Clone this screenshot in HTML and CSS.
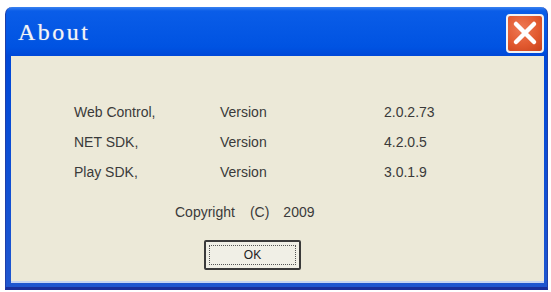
FILE: index.html
```html
<!DOCTYPE html>
<html>
<head>
<meta charset="utf-8">
<link rel="stylesheet" href="styles.css">
</head>
<body>
<div class="window">
  <div class="titlebar">
    <span class="title">About</span>
    <div class="close">
      <svg width="26" height="26" viewBox="0 0 26 26"><path d="M4 4 L22 22 M22 4 L4 22" stroke="#fff" stroke-width="4.5" stroke-linecap="round"/></svg>
    </div>
  </div>
  <div class="client">
    <div class="info">
      <span>Web Control,</span><span>Version</span><span>2.0.2.73</span>
      <span>NET SDK,</span><span>Version</span><span>4.2.0.5</span>
      <span>Play SDK,</span><span>Version</span><span>3.0.1.9</span>
    </div>
    <div class="copy"><span class="c1">Copyright</span><span class="c2">(C)</span><span class="c3">2009</span></div>
    <div class="btn"><div class="focus">OK</div></div>
  </div>
</div>
</body>
</html>
```
FILE: styles.css
```css
html, body { margin: 0; background: #fff; }
body { width: 551px; height: 292px; overflow: hidden; }
.window {
  margin: 7px 0 0 5px;
  width: 543px;
  height: 283px;
  box-sizing: border-box;
  background: linear-gradient(to bottom, #3a82f0 0px, #0a5de8 4px, #0053e2 40px, #0048d8 49px, #1f56cf 100%);
  border-radius: 7px 7px 0 0;
  padding: 0 3px 4px 5px;
  display: flex;
  flex-direction: column;
  border-bottom: 3px solid #1a2f9a;
  border-left: 1px solid #1f3fa8;
  border-right: 1px solid #1f3fa8;
}
.titlebar {
  height: 49px;
  flex: none;
  display: flex;
  align-items: center;
  justify-content: space-between;
}
.title {
  font-family: "Liberation Serif", "DejaVu Serif", serif;
  font-size: 24px;
  letter-spacing: 2.5px;
  color: #f4f4f4;
  margin-left: 7px;
  margin-top: 2px;
  text-shadow: 0 0 1px rgba(255,255,255,0.5);
}
.close {
  width: 38px;
  height: 39px;
  margin-top: 3px;
  box-sizing: border-box;
  border: 2px solid #f2f2f2;
  border-radius: 4px;
  background: radial-gradient(circle at 40% 35%, #ee7a55 0%, #e25a30 55%, #c8421c 100%);
  display: flex;
  align-items: center;
  justify-content: center;
}
.client {
  flex: 1;
  background: #ece9d8;
  border-bottom: 2px solid #c6d4f2;
  font-family: "Liberation Sans", Arial, sans-serif;
  font-size: 14px;
  color: #3a3a3a;
}
.info {
  display: grid;
  grid-template-columns: 146px 164px auto;
  grid-auto-rows: 30px;
  align-items: center;
  margin: 41px 0 0 63px;
}
.copy {
  display: flex;
  height: 30px;
  align-items: center;
  margin: 10px 0 0 164px;
}
.c2 { margin-left: 15px; }
.c3 { margin-left: 14px; }
.btn {
  width: 97px;
  height: 30px;
  box-sizing: border-box;
  margin: 13px 0 0 193px;
  border: 2px solid #3a3a3a;
  border-radius: 2px;
  background: #f0efe6;
  padding: 3px;
}
.focus {
  height: 100%;
  box-sizing: border-box;
  border: 1px dotted #555;
  display: flex;
  align-items: center;
  justify-content: center;
  font-size: 12px;
  color: #222;
}
```
